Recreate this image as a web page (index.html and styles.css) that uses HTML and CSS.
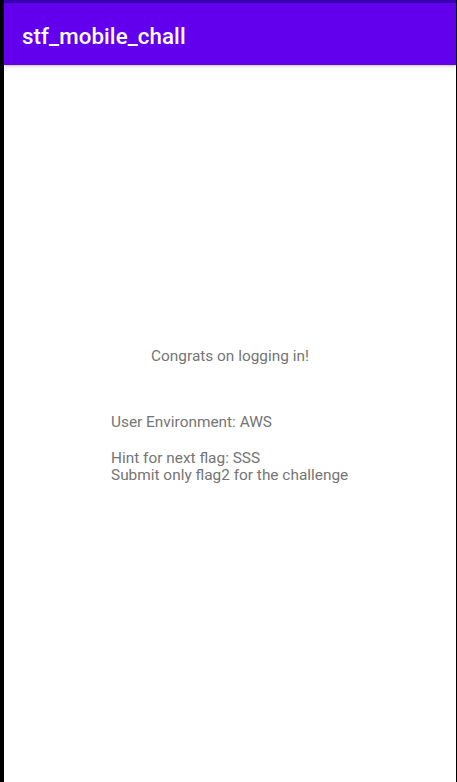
FILE: index.html
```html
<!DOCTYPE html>
<html>
<head>
<meta charset="utf-8">
<link rel="stylesheet" href="styles.css">
</head>
<body>
<div class="screen">
  <div class="statusbar"></div>
  <header class="appbar"><h1 class="title">stf_mobile_chall</h1></header>
  <main class="content">
    <p class="congrats">Congrats on logging in!</p>
    <div class="info">
      <p class="line">User Environment: AWS</p>
      <p class="line blank">&nbsp;</p>
      <p class="line">Hint for next flag: SSS</p>
      <p class="line">Submit only flag2 for the challenge</p>
    </div>
  </main>
</div>
</body>
</html>
```
FILE: styles.css
```css
html, body {
  margin: 0;
  padding: 0;
  height: 100%;
  background: #000;
}
body {
  display: flex;
  font-family: Roboto, "Noto Sans", sans-serif;
}
.screen {
  margin-left: 4px;
  width: 452px;
  height: 782px;
  background: #fff;
  display: flex;
  flex-direction: column;
}
.statusbar {
  height: 3px;
  background: #3700B3;
  flex: none;
}
.appbar {
  height: 62px;
  background: #6200EE;
  display: flex;
  align-items: center;
  padding-left: 18px;
  box-shadow: 0 1px 3px rgba(0,0,0,0.25);
  position: relative;
  z-index: 1;
  flex: none;
}
.title {
  margin: 3px 0 0 0;
  color: #fff;
  font-size: 22.3px;
  font-weight: 500;
  letter-spacing: 0.1px;
}
.content {
  padding-top: 283px;
  display: flex;
  flex-direction: column;
  align-items: center;
  color: #757575;
  font-size: 15.4px;
}
.congrats {
  margin: 0;
  line-height: 17px;
}
.info {
  margin-top: 49px;
  align-self: flex-start;
  margin-left: 107px;
}
.line {
  margin: 0;
  line-height: 17px;
}
.blank {
  line-height: 19px;
}
```
